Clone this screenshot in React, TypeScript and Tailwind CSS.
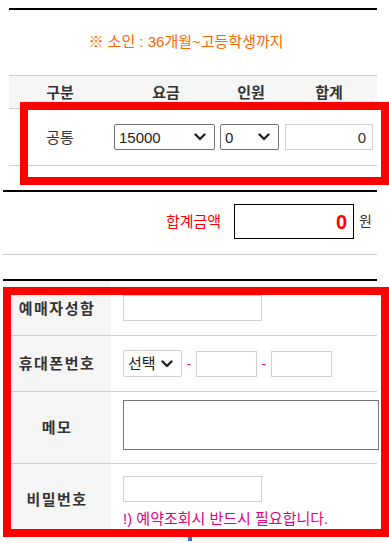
function Chevron() {
  return (
    <svg width="12" height="8" viewBox="0 0 12 8" className="shrink-0">
      <polyline points="1.5,1.5 6,6 10.5,1.5" fill="none" stroke="#222" strokeWidth="2.4" strokeLinecap="round" strokeLinejoin="round" />
    </svg>
  );
}

function Select({ value, className }: { value: string; className: string }) {
  return (
    <div className={`flex items-center justify-between h-[26px] pl-[4px] pr-[8px] bg-white rounded-[2px] text-[15px] text-[#222] ${className}`}>
      <span>{value}</span>
      <Chevron />
    </div>
  );
}

function Label({ children }: { children: string }) {
  return (
    <div className="w-[108px] shrink-0 self-stretch flex items-center justify-center bg-[#f5f5f5] text-[15px] font-bold tracking-[1.5px] text-[#333]">
      {children}
    </div>
  );
}

export default function App() {
  return (
    <div className="relative w-[389px] h-[543px] overflow-hidden bg-white font-['Liberation_Sans','Noto_Sans_CJK_KR',sans-serif] leading-none">
      {/* 요금 선택 */}
      <div className="ml-[9px] w-[368px] pt-[8px]">
        <div className="border-t-2 border-black" />
        <div className="h-[65px] flex items-center justify-center pb-[3px] pr-[14px] text-[15px] text-[#ff6600]">
          ※ 소인 : 36개월~고등학생까지
        </div>
        <div className="border-t border-[#cccccc]">
          <div className="grid grid-cols-[102px_110px_60px_96px] h-[33px] items-center bg-[#f5f5f5] border-b border-[#cccccc] text-[15px] font-bold text-[#333]">
            <div className="text-center">구분</div>
            <div className="text-center">요금</div>
            <div className="text-center">인원</div>
            <div className="text-center">합계</div>
          </div>
          <div className="flex items-center h-[57px] border-b border-[#cccccc]">
            <div className="w-[102px] text-center text-[15px] text-[#333]">공통</div>
            <Select value="15000" className="ml-[3px] w-[101px] border border-[#767676]" />
            <Select value="0" className="ml-[5px] w-[59px] border border-[#767676]" />
            <input
              readOnly
              value="0"
              className="ml-[6px] w-[88px] h-[26px] border border-[#d0d0d0] px-[6px] text-right text-[15px] text-[#333] outline-none"
            />
          </div>
        </div>
      </div>

      {/* 합계금액 */}
      <div className="ml-[3px] w-[374px] mt-[24px]">
        <div className="border-t-2 border-black" />
        <div className="h-[63px] flex items-start justify-end pt-[12px] pr-[5px] border-b border-[#cccccc]">
          <span className="mt-[10px] mr-[13px] text-[15px] text-[#ff0000]">합계금액</span>
          <div className="w-[120px] h-[35px] border border-black flex items-center justify-end pr-[6px] text-[20px] font-bold text-[#ff0000]">
            0
          </div>
          <span className="mt-[10px] ml-[5px] text-[14px] text-[#333]">원</span>
        </div>
      </div>

      {/* 예매자 정보 */}
      <div className="ml-[3px] w-[374px] mt-[24px]">
        <div className="border-t-2 border-black" />
        <div className="flex h-[55px] border-b border-[#cccccc]">
          <Label>예매자성함</Label>
          <div className="flex items-center pl-[12px]">
            <input className="w-[139px] h-[26px] border border-[#d0d0d0] outline-none" />
          </div>
        </div>
        <div className="flex h-[56px] border-b border-[#cccccc]">
          <Label>휴대폰번호</Label>
          <div className="flex items-center pl-[12px] text-[13px] text-[#e4007f]">
            <Select value="선택" className="w-[59px] h-[27px] border border-[#d0d0d0] pr-[5px]" />
            <span className="w-[14px] text-center">-</span>
            <input className="w-[61px] h-[26px] border border-[#d0d0d0] outline-none" />
            <span className="w-[14px] text-center">-</span>
            <input className="w-[61px] h-[26px] border border-[#d0d0d0] outline-none" />
          </div>
        </div>
        <div className="flex h-[72px] border-b border-[#cccccc]">
          <Label>메모</Label>
          <div className="pl-[12px] pt-[8px]">
            <textarea className="block w-[256px] h-[50px] border border-[#767676] resize-none outline-none" />
          </div>
        </div>
        <div className="flex h-[71px] border-b border-[#cccccc]">
          <Label>비밀번호</Label>
          <div className="flex flex-col pl-[12px] pt-[12px]">
            <input type="password" className="w-[139px] h-[26px] border border-[#d0d0d0] outline-none" />
            <span className="mt-[9px] text-[15px] text-[#e4007f]">!) 예약조회시 반드시 필요합니다.</span>
          </div>
        </div>
        <div className="flex justify-center">
          <div className="w-[4px] h-[6px] bg-[#3a6ad8]" />
        </div>
      </div>

      {/* 강조 표시 */}
      <div className="absolute left-[20px] top-[102px] w-[369px] h-[83px] border-8 border-[#ff0000] pointer-events-none" />
      <div className="absolute left-[3px] top-[287px] w-[386px] h-[250px] border-8 border-[#ff0000] pointer-events-none" />
    </div>
  );
}
